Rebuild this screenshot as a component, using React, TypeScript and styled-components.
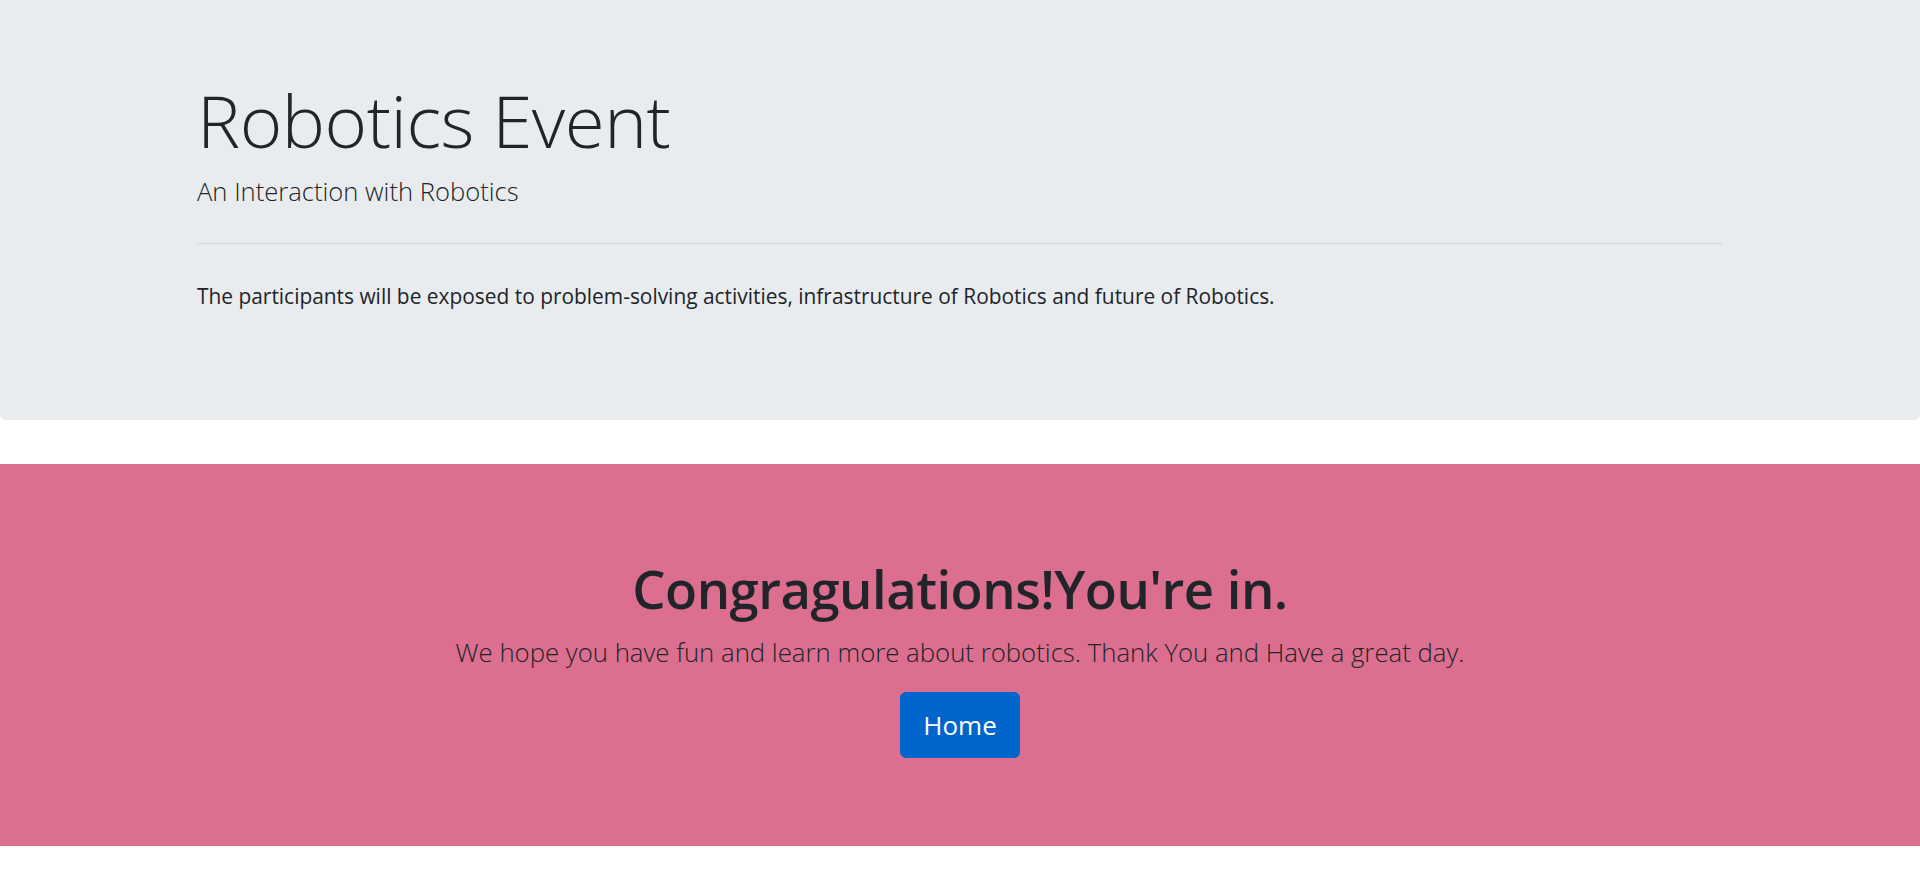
import React from "react";
import styled, { createGlobalStyle } from "styled-components";

const GlobalStyle = createGlobalStyle`
  html, body {
    margin: 0;
    padding: 0;
    background: #ffffff;
    font-family: "Open Sans", "Noto Sans", Arial, sans-serif;
    color: #212529;
  }
  * { box-sizing: border-box; }
`;

const Jumbotron = styled.header`
  background: #e9ecef;
  border-radius: 0 0 6px 6px;
  height: 420px;
  padding: 76px 198px 0 197px;
  margin-bottom: 44px;
`;

const Title = styled.h1`
  margin: 0;
  font-size: 72.7px;
  font-weight: 300;
  line-height: 88px;
  letter-spacing: -0.5px;
`;

const Subtitle = styled.p`
  margin: 10px 0 0;
  font-size: 25.6px;
  font-weight: 300;
  line-height: 36px;
`;

const Divider = styled.hr`
  margin: 33px 0 0;
  border: 0;
  border-top: 1px solid #d2d4d7;
`;

const Description = styled.p`
  margin: 38px 0 0;
  font-size: 20.9px;
  font-weight: 400;
  line-height: 28px;
`;

const Banner = styled.section`
  background: #dc6e8f;
  height: 382px;
  display: flex;
  flex-direction: column;
  align-items: center;
  padding-top: 95px;
`;

const BannerHeading = styled.h2`
  margin: 0;
  font-size: 52.6px;
  font-weight: 600;
  line-height: 60px;
  letter-spacing: -0.5px;
`;

const Lead = styled.p`
  margin: 15px 0 0;
  font-size: 25.75px;
  font-weight: 300;
  line-height: 36px;
  color: #212529;
`;

const HomeButton = styled.a`
  display: inline-flex;
  align-items: center;
  justify-content: center;
  margin-top: 22px;
  width: 120px;
  height: 66px;
  background: #0066cc;
  color: #ffffff;
  border-radius: 6px;
  font-size: 26px;
  font-weight: 400;
  text-decoration: none;
`;

export default function App() {
  return (
    <>
      <GlobalStyle />
      <Jumbotron>
        <Title>Robotics Event</Title>
        <Subtitle>An Interaction with Robotics</Subtitle>
        <Divider />
        <Description>
          The participants will be exposed to problem-solving activities, infrastructure of Robotics and future of Robotics.
        </Description>
      </Jumbotron>
      <Banner>
        <BannerHeading>Congragulations!You're in.</BannerHeading>
        <Lead>We hope you have fun and learn more about robotics. Thank You and Have a great day.</Lead>
        <HomeButton href="#">Home</HomeButton>
      </Banner>
    </>
  );
}
